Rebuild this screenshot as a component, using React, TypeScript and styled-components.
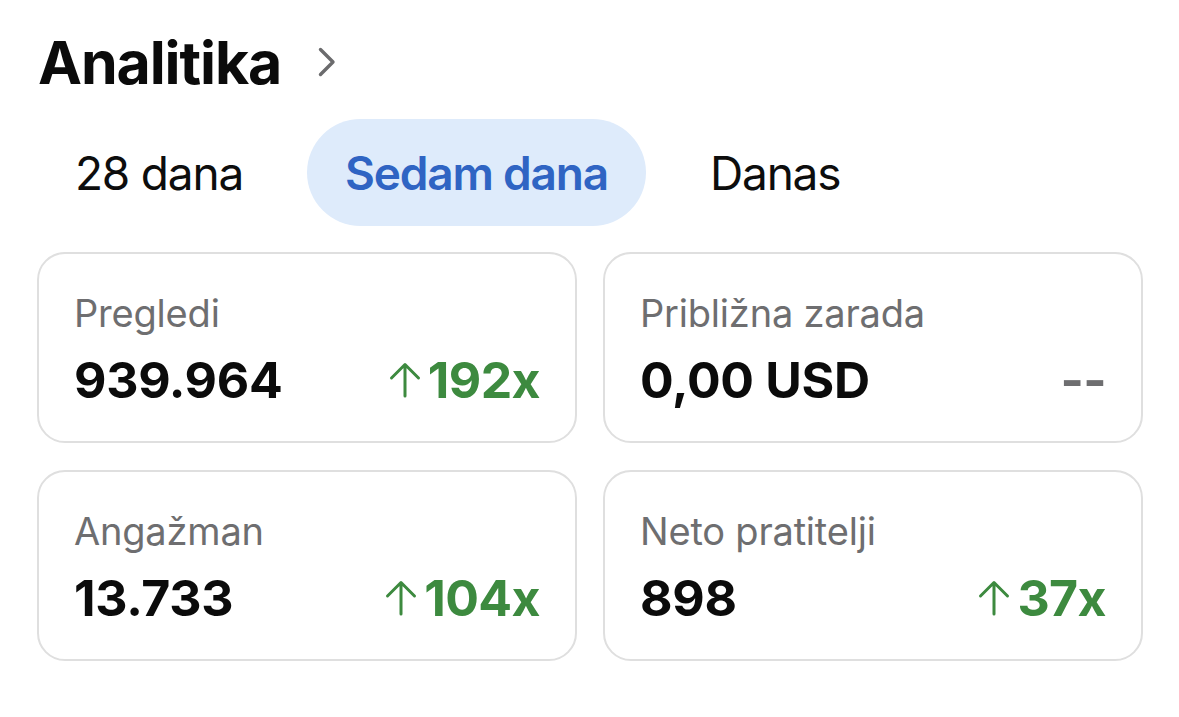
import React from "react";
import styled, { createGlobalStyle } from "styled-components";

const Global = createGlobalStyle`
  html, body { margin: 0; padding: 0; background: #ffffff; }
  body { font-family: Inter, "Noto Sans", sans-serif; color: #0a0a0a; }
`;

const Page = styled.div`
  padding: 26px 36px 40px 37px;
  display: flex;
  flex-direction: column;
`;

const Header = styled.div`
  display: flex;
  align-items: center;
  gap: 37px;
  height: 72px;
  padding-left: 1px;
`;

const Title = styled.h1`
  margin: 0;
  font-size: 59px;
  font-weight: 700;
  letter-spacing: -1.1px;
  line-height: 1;
  color: #0b0b0b;
`;

const Tabs = styled.div`
  display: flex;
  gap: 26px;
  margin-top: 21px;
`;

const Tab = styled.button<{ $active?: boolean }>`
  border: none;
  height: 107px;
  padding: 0 38px;
  border-radius: 54px;
  font-family: Inter, "Noto Sans", sans-serif;
  font-size: 46px;
  font-weight: ${(p) => (p.$active ? 600 : 400)};
  color: ${(p) => (p.$active ? "#2f64c3" : "#0d0d0d")};
  background: ${(p) => (p.$active ? "#deebfb" : "transparent")};
  letter-spacing: -1.2px;
  cursor: pointer;
`;

const Grid = styled.div`
  display: grid;
  grid-template-columns: 1fr 1fr;
  column-gap: 26px;
  row-gap: 27px;
  margin-top: 26px;
`;

const Card = styled.div`
  height: 191px;
  box-sizing: border-box;
  border: 2px solid #dfdfdf;
  border-radius: 28px;
  padding: 37px 35px 0 35px;
  display: flex;
  flex-direction: column;
`;

const Label = styled.div`
  font-size: 38px;
  color: #6e6e70;
  line-height: 44px;
  letter-spacing: -0.2px;
`;

const Row = styled.div`
  display: flex;
  justify-content: space-between;
  align-items: center;
  margin-top: 15px;
  height: 60px;
`;

const Value = styled.div`
  font-size: 50px;
  font-weight: 700;
  line-height: 60px;
  letter-spacing: -0.3px;
  color: #0b0b0b;
`;

const Change = styled.div<{ $muted?: boolean }>`
  display: flex;
  align-items: center;
  gap: 7px;
  font-size: 50px;
  font-weight: 700;
  line-height: 60px;
  letter-spacing: -0.6px;
  color: ${(p) => (p.$muted ? "#6e6e70" : "#3d8a3f")};
`;

const Chevron = () => (
  <svg width="18" height="30" viewBox="0 0 18 30" fill="none">
    <path d="M2.5 2.5 L15 15 L2.5 27.5" stroke="#6b6b6d" strokeWidth="3.4" strokeLinecap="round" strokeLinejoin="round" />
  </svg>
);

const UpArrow = () => (
  <svg width="32" height="36" viewBox="0 0 32 36" fill="none">
    <path d="M16 3 V34 M2.5 16 L16 2.5 L29.5 16" stroke="#3d8a3f" strokeWidth="3" strokeLinecap="round" strokeLinejoin="round" />
  </svg>
);

type Stat = { label: string; value: string; change?: string };

const stats: Stat[] = [
  { label: "Pregledi", value: "939.964", change: "192x" },
  { label: "Približna zarada", value: "0,00 USD" },
  { label: "Angažman", value: "13.733", change: "104x" },
  { label: "Neto pratitelji", value: "898", change: "37x" },
];

export default function App() {
  return (
    <>
      <Global />
      <Page>
        <Header>
          <Title>Analitika</Title>
          <Chevron />
        </Header>
        <Tabs>
          <Tab>28 dana</Tab>
          <Tab $active>Sedam dana</Tab>
          <Tab>Danas</Tab>
        </Tabs>
        <Grid>
          {stats.map((s) => (
            <Card key={s.label}>
              <Label>{s.label}</Label>
              <Row>
                <Value>{s.value}</Value>
                {s.change ? (
                  <Change>
                    <UpArrow />
                    {s.change}
                  </Change>
                ) : (
                  <Change $muted>--</Change>
                )}
              </Row>
            </Card>
          ))}
        </Grid>
      </Page>
    </>
  );
}
